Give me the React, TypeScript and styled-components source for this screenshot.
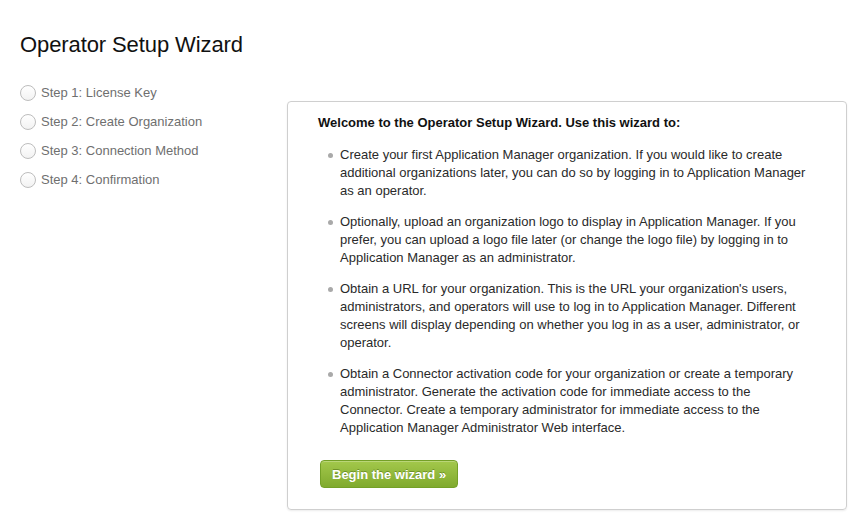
import React from 'react';
import styled, { createGlobalStyle } from 'styled-components';

const GlobalStyle = createGlobalStyle`
  html, body {
    margin: 0;
    padding: 0;
    background: #ffffff;
  }
  body {
    font-family: 'Liberation Sans', Arial, Helvetica, sans-serif;
    -webkit-font-smoothing: antialiased;
  }
`;

const Page = styled.div`
  padding: 30px 19px 0 20px;
  width: 866px;
  height: 520px;
  box-sizing: border-box;
  overflow: hidden;
`;

const Title = styled.h1`
  margin: 0 0 18px 0;
  font-size: 22px;
  font-weight: normal;
  line-height: 30px;
  color: #111111;
  letter-spacing: -0.1px;
`;

const Layout = styled.div`
  display: flex;
  align-items: flex-start;
`;

const StepList = styled.ul`
  list-style: none;
  margin: 0;
  padding: 0;
  width: 267px;
  flex-shrink: 0;
`;

const Step = styled.li`
  display: flex;
  align-items: center;
  gap: 5px;
  height: 29px;
  font-size: 13px;
  color: #6f6f6f;
`;

const Radio = styled.span`
  width: 14px;
  height: 14px;
  border-radius: 50%;
  border: 1px solid #bdbdbd;
  background: linear-gradient(#ffffff, #f2f2f2);
  box-sizing: content-box;
  flex-shrink: 0;
`;

const Panel = styled.section`
  width: 560px;
  margin-top: 23px;
  box-sizing: border-box;
  border: 1px solid #cfcfcf;
  border-radius: 4px;
  box-shadow: 0 1px 2px rgba(0, 0, 0, 0.08);
  padding: 12px 30px 21px 30px;
  color: #2a2a2a;
  font-size: 13px;
  line-height: 18px;
`;

const Heading = styled.h2`
  margin: 0 0 14px 0;
  font-size: 13px;
  line-height: 18px;
  font-weight: bold;
  color: #111111;
`;

const Bullets = styled.ul`
  list-style: none;
  margin: 0 0 23px 0;
  padding: 0 0 0 22px;
`;

const Bullet = styled.li`
  position: relative;
  margin-bottom: 13px;

  &:last-child {
    margin-bottom: 0;
  }

  &::before {
    content: '';
    position: absolute;
    left: -12px;
    top: 7px;
    width: 5px;
    height: 5px;
    border-radius: 50%;
    background: #a9a9a9;
  }
`;

const BeginButton = styled.button`
  display: inline-block;
  box-sizing: border-box;
  height: 28px;
  margin-left: 2px;
  padding: 0 11px;
  border: 1px solid #74a027;
  border-radius: 4px;
  background: linear-gradient(#a3c84b, #80aa2e);
  box-shadow: inset 0 1px 0 rgba(255, 255, 255, 0.25);
  color: #ffffff;
  font-family: 'Liberation Sans', Arial, Helvetica, sans-serif;
  font-size: 13px;
  font-weight: bold;
  text-shadow: 0 -1px 0 rgba(60, 90, 10, 0.45);
  cursor: pointer;
`;

const steps = [
  'Step 1: License Key',
  'Step 2: Create Organization',
  'Step 3: Connection Method',
  'Step 4: Confirmation',
];

const bullets = [
  'Create your first Application Manager organization. If you would like to create additional organizations later, you can do so by logging in to Application Manager as an operator.',
  'Optionally, upload an organization logo to display in Application Manager. If you prefer, you can upload a logo file later (or change the logo file) by logging in to Application Manager as an administrator.',
  "Obtain a URL for your organization. This is the URL your organization's users, administrators, and operators will use to log in to Application Manager. Different screens will display depending on whether you log in as a user, administrator, or operator.",
  'Obtain a Connector activation code for your organization or create a temporary administrator. Generate the activation code for immediate access to the Connector. Create a temporary administrator for immediate access to the Application Manager Administrator Web interface.',
];

export default function App() {
  return (
    <>
      <GlobalStyle />
      <Page>
        <Title>Operator Setup Wizard</Title>
        <Layout>
          <StepList>
            {steps.map((s) => (
              <Step key={s}>
                <Radio />
                {s}
              </Step>
            ))}
          </StepList>
          <Panel>
            <Heading>Welcome to the Operator Setup Wizard. Use this wizard to:</Heading>
            <Bullets>
              {bullets.map((b) => (
                <Bullet key={b}>{b}</Bullet>
              ))}
            </Bullets>
            <BeginButton type="button">Begin the wizard »</BeginButton>
          </Panel>
        </Layout>
      </Page>
    </>
  );
}
